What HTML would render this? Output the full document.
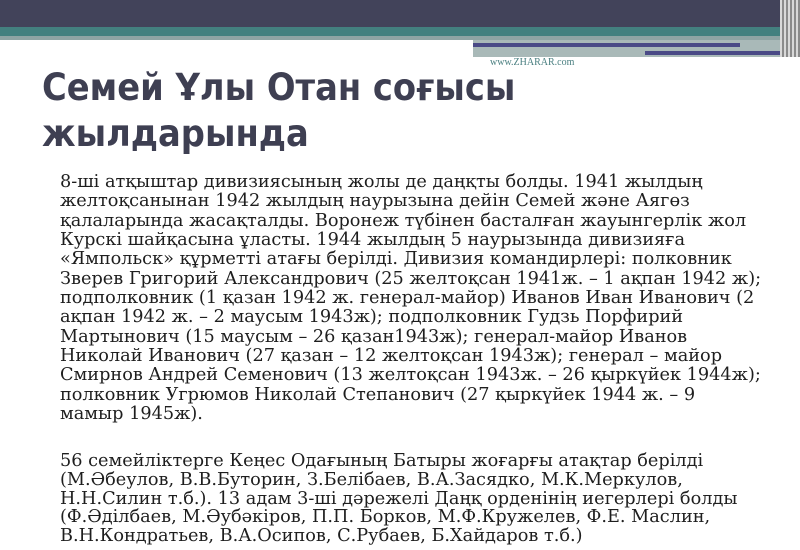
<!DOCTYPE html>
<html><head><meta charset="utf-8"><style>
html,body{margin:0;padding:0}
body{width:800px;height:550px;position:relative;overflow:hidden;background:#fff}
.a{position:absolute}
.t{font-family:"DejaVu Sans Condensed","DejaVu Sans",sans-serif;font-weight:bold;font-size:37.5px;color:#3e3f52;left:42px;white-space:nowrap}
.p{font-family:"DejaVu Serif","Liberation Serif",serif;font-size:17.7px;color:#1e1e1e;left:60px;white-space:nowrap}
.p div{height:19.35px;line-height:19.35px}
.q div{height:18.75px;line-height:18.75px}
</style></head><body>
<div class="a" style="left:0;top:0;width:800px;height:27px;background:#42435a"></div>
<div class="a" style="left:0;top:27px;width:800px;height:9px;background:#43807f"></div>
<div class="a" style="left:0;top:36px;width:800px;height:4px;background:#8fa4a4"></div>
<div class="a" style="left:473px;top:40px;width:327px;height:17px;background:#a9b9b8"></div>
<div class="a" style="left:473px;top:43px;width:267px;height:4px;background:#4a4a86"></div>
<div class="a" style="left:645px;top:51px;width:140px;height:4px;background:#4a4a86"></div>
<div class="a" style="left:780px;top:0;width:20px;height:57px;background:repeating-linear-gradient(90deg,#d8d8d8 0 2px,#8a8a8a 2px 4px)"></div>
<div class="a" style="left:490px;top:57px;font:10px 'Liberation Serif',serif;color:#4a7f80">www.ZHARAR.com</div>
<div class="a t" style="top:65px;line-height:44px">Семей Ұлы Отан соғысы</div>
<div class="a t" style="top:111px;line-height:44px">жылдарында</div>
<div class="a p" style="top:173px">
<div>8-ші атқыштар дивизиясының жолы де даңқты болды. 1941 жылдың</div>
<div>желтоқсанынан 1942 жылдың наурызына дейін Семей және Аягөз</div>
<div>қалаларында жасақталды. Воронеж түбінен басталған жауынгерлік жол</div>
<div>Курскі шайқасына ұласты. 1944 жылдың 5 наурызында дивизияға</div>
<div>«Ямпольск» құрметті атағы берілді. Дивизия командирлері: полковник</div>
<div>Зверев Григорий Александрович (25 желтоқсан 1941ж. – 1 ақпан 1942 ж);</div>
<div>подполковник (1 қазан 1942 ж. генерал-майор) Иванов Иван Иванович (2</div>
<div>ақпан 1942 ж. – 2 маусым 1943ж); подполковник Гудзь Порфирий</div>
<div>Мартынович (15 маусым – 26 қазан1943ж); генерал-майор Иванов</div>
<div>Николай Иванович (27 қазан – 12 желтоқсан 1943ж); генерал – майор</div>
<div>Смирнов Андрей Семенович (13 желтоқсан 1943ж. – 26 қыркүйек 1944ж);</div>
<div>полковник Угрюмов Николай Степанович (27 қыркүйек 1944 ж. – 9</div>
<div>мамыр 1945ж).</div>
</div>
<div class="a p q" style="top:452px">
<div>56 семейліктерге Кеңес Одағының Батыры жоғарғы атақтар берілді</div>
<div>(М.Әбеулов, В.В.Буторин, З.Белібаев, В.А.Засядко, М.К.Меркулов,</div>
<div>Н.Н.Силин т.б.). 13 адам 3-ші дәрежелі Даңқ орденінің иегерлері болды</div>
<div>(Ф.Әділбаев, М.Әубәкіров, П.П. Борков, М.Ф.Кружелев, Ф.Е. Маслин,</div>
<div>В.Н.Кондратьев, В.А.Осипов, С.Рубаев, Б.Хайдаров т.б.)</div>
</div>
</body></html>
